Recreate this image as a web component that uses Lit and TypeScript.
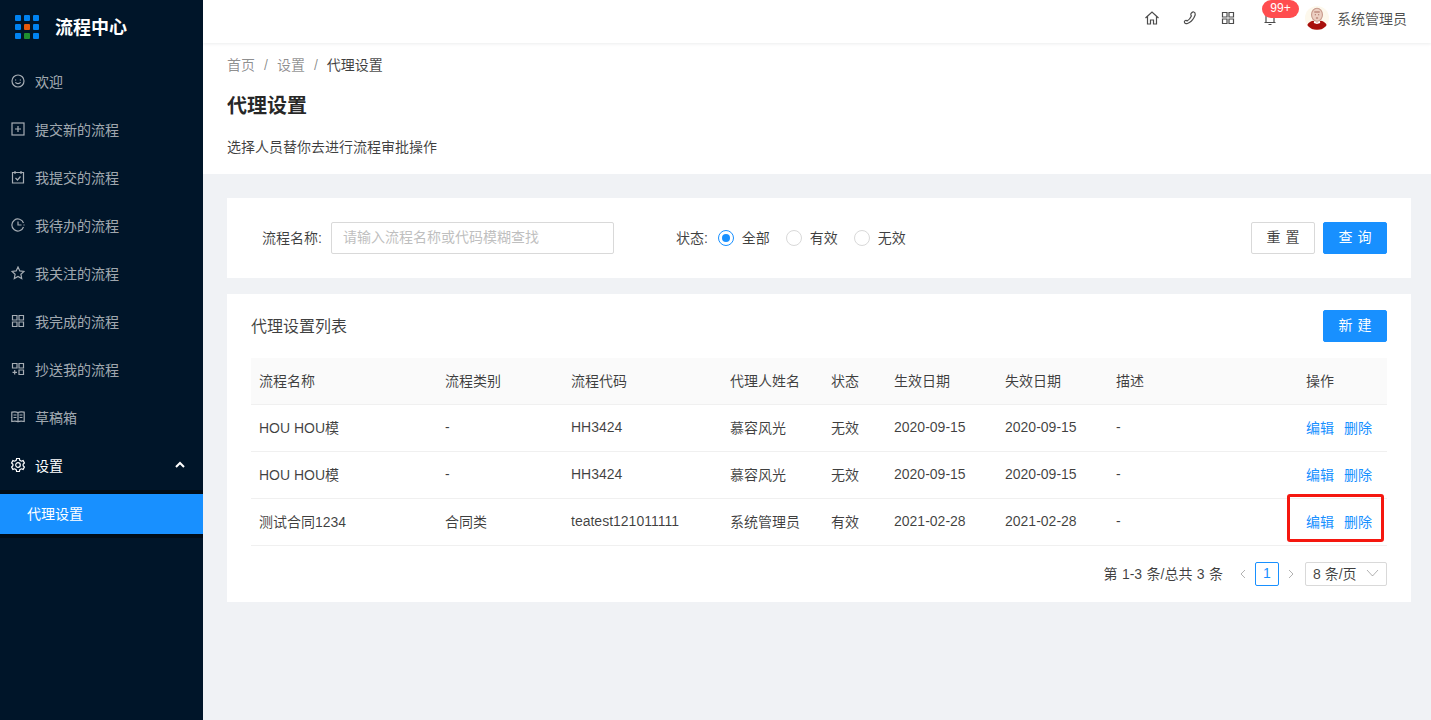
import { LitElement, html, css, svg } from 'lit';
import { customElement } from 'lit/decorators.js';

const menuIcons = {
  smile: svg`<circle cx="7" cy="7" r="6"/><path d="M4.600 5.600v.8M9.400 5.600v.8M4.400 8.400c1.300 1.600 3.900 1.600 5.200 0"/>`,
  plus: svg`<rect x="1" y="1" width="12" height="12"/><path d="M7 4v6M4 7h6"/>`,
  task: svg`<path d="M1.500 2.500h11v10.500h-11zM4 1v3M10 1v3M4.500 8l2 2 3-3.500"/>`,
  clock: svg`<path d="M12.500 5A6 6 0 1 0 12.500 9M7 3.500V7h3.500M12.500 7h1"/>`,
  star: svg`<path d="M7 1l1.800 3.900 4.200.5-3.100 2.900.8 4.200L7 10.400 3.300 12.500l.8-4.200L1 5.400l4.200-.5z"/>`,
  grid: svg`<path d="M1.500 1.500h4.500v4.500H1.500zM8 1.500h4.500v4.500H8zM1.500 8h4.500v4.500H1.500zM8 8h4.500v4.500H8z"/>`,
  gridAdd: svg`<path d="M1.500 1.500h4.500v4.500H1.500zM8 1.500h4.500v4.500H8zM8 8h4.500v4.500H8zM3.700 8v4.500M1.500 10.300h4.500"/>`,
  book: svg`<path d="M7 2.500C5.500 1.700 3 1.700.8 2.200v9.300C3 11 5.500 11 7 11.800c1.500-.8 4-.8 6.200-.3V2.200C11 1.700 8.500 1.700 7 2.500zM7 2.500v9.300M2.500 5h3M2.500 7.500h3M8.500 5h3M8.500 7.500h3"/>`,
  gear: svg`<path d="M5.600 1h2.800l.4 1.800 1.500.9 1.800-.6 1.300 2.400-1.300 1.200v1.600l1.300 1.200-1.300 2.400-1.800-.6-1.500.9-.4 1.800H5.600l-.4-1.800-1.500-.9-1.800.6L.6 9.500l1.300-1.200V6.700L.6 5.500l1.300-2.400 1.800.6 1.500-.9z" transform="translate(0 -.5)"/><circle cx="7" cy="7" r="2.300"/>`,
};

const menu: [keyof typeof menuIcons, string][] = [
  ['smile', '欢迎'],
  ['plus', '提交新的流程'],
  ['task', '我提交的流程'],
  ['clock', '我待办的流程'],
  ['star', '我关注的流程'],
  ['grid', '我完成的流程'],
  ['gridAdd', '抄送我的流程'],
  ['book', '草稿箱'],
];

const rows = [
  ['HOU HOU模', '-', 'HH3424', '慕容风光', '无效', '2020-09-15', '2020-09-15', '-'],
  ['HOU HOU模', '-', 'HH3424', '慕容风光', '无效', '2020-09-15', '2020-09-15', '-'],
  ['测试合同1234', '合同类', 'teatest121011111', '系统管理员', '有效', '2021-02-28', '2021-02-28', '-'],
];

const cols = ['流程名称', '流程类别', '流程代码', '代理人姓名', '状态', '生效日期', '失效日期', '描述', '操作'];
const widths = [186, 126, 159, 101, 63, 111, 111, 190, 89];

@customElement('app-root')
export class AppRoot extends LitElement {
  static styles = css`
    :host {
      display: flex;
      height: 720px;
      overflow: hidden;
      font-family: 'Liberation Sans', 'Noto Sans CJK SC', sans-serif;
      font-size: 14px;
      color: rgba(0, 0, 0, 0.75);
      background: #f0f2f5;
    }
    .side {
      width: 203px;
      flex: none;
      background: #001529;
      color: rgba(255, 255, 255, 0.65);
    }
    .logo {
      display: flex;
      align-items: center;
      gap: 16px;
      height: 54px;
      padding-left: 15px;
      margin-bottom: 8px;
      color: #fff;
      font-size: 18px;
      font-weight: 700;
    }
    .logo span {
      padding-bottom: 2px;
    }
    .dots {
      display: grid;
      grid-template-columns: repeat(3, 6px);
      gap: 3px;
    }
    .dots i {
      width: 6px;
      height: 6px;
      border-radius: 1px;
      background: #0082f0;
    }
    .item {
      display: flex;
      align-items: center;
      height: 40px;
      box-sizing: border-box;
      margin-bottom: 8px;
      padding: 0 0 3px 11px;
      gap: 10px;
    }
    .item svg {
      width: 14px;
      height: 14px;
      flex: none;
    }
    .item.open {
      color: #fff;
      margin-bottom: 4px;
    }
    .item .arrow {
      width: 10px;
      height: 10px;
      margin-left: auto;
      margin-right: 18px;
    }
    .sub {
      background: #000c17;
      padding: 4px 0;
    }
    .sub div {
      height: 40px;
      line-height: 40px;
      padding-left: 27px;
      background: #1890ff;
      color: #fff;
    }
    .main {
      flex: 1;
      min-width: 0;
      position: relative;
    }
    .top {
      height: 43px;
      box-sizing: border-box;
      padding: 0 24px 7px 0;
      background: #fff;
      box-shadow: 0 1px 3px rgba(0, 21, 41, 0.08);
      display: flex;
      align-items: center;
      justify-content: flex-end;
      position: relative;
      color: rgba(0, 0, 0, 0.7);
    }
    .top svg.ti {
      width: 16px;
      height: 16px;
      margin-right: 22px;
    }
    .top svg.ti.last {
      margin-right: 0;
    }
    .bell {
      position: relative;
      width: 16px;
      height: 16px;
      margin: 0 27px 0 26px;
    }
    .bell svg {
      width: 16px;
      height: 16px;
    }
    .badge {
      position: absolute;
      top: -10px;
      left: 0;
      height: 18px;
      line-height: 16px;
      width: 37px;
      text-align: center;
      border-radius: 9px;
      background: #ff4d4f;
      color: #fff;
      font-size: 12px;
    }
    .avatar {
      width: 24px;
      height: 24px;
      border-radius: 50%;
      background: #fdf8ec;
      margin-right: 8px;
    }
    .head {
      background: #fff;
      height: 131px;
      padding: 12px 24px 0;
      box-sizing: border-box;
    }
    .crumb {
      display: flex;
      gap: 9px;
      line-height: 20px;
      color: rgba(0, 0, 0, 0.45);
    }
    .crumb b {
      font-weight: 400;
      color: rgba(0, 0, 0, 0.75);
    }
    h1 {
      margin: 16px 0 0;
      font-size: 20px;
      line-height: 30px;
      font-weight: 600;
      color: rgba(0, 0, 0, 0.85);
    }
    .desc {
      margin-top: 16px;
      line-height: 20px;
    }
    .card {
      background: #fff;
      margin: 0 20px 16px 24px;
    }
    .filter {
      margin-top: 24px;
      height: 80px;
      display: flex;
      align-items: center;
      padding: 0 24px 0 35px;
    }
    .filter > span:not(.radio) {
      padding-bottom: 2px;
    }
    .input {
      width: 283px;
      height: 32px;
      box-sizing: border-box;
      margin-left: 9px;
      border: 1px solid #d9d9d9;
      border-radius: 2px;
      padding-left: 11px;
      line-height: 29px;
      color: #bfbfbf;
    }
    .state {
      margin-left: 62px;
    }
    .radio {
      width: 16px;
      height: 16px;
      box-sizing: border-box;
      border: 1px solid #d9d9d9;
      border-radius: 50%;
      margin: 0 8px 0 16px;
      position: relative;
    }
    .radio.first {
      margin-left: 10px;
    }
    .radio.on {
      border-color: #1890ff;
    }
    .radio.on::after {
      content: '';
      position: absolute;
      inset: 3px;
      border-radius: 50%;
      background: #1890ff;
    }
    .btn {
      width: 64px;
      height: 32px;
      line-height: 29px;
      box-sizing: border-box;
      text-align: center;
      border: 1px solid #d9d9d9;
      border-radius: 2px;
      background: #fff;
      word-spacing: 1px;
    }
    .btn.primary {
      background: #1890ff;
      border-color: #1890ff;
      color: #fff;
    }
    .btn.gap {
      margin-left: 8px;
    }
    .grow {
      flex: 1;
    }
    .list {
      padding: 16px 24px;
      height: 308px;
      box-sizing: border-box;
    }
    .list-head {
      display: flex;
      align-items: center;
      justify-content: space-between;
      height: 32px;
      font-size: 16px;
      margin-bottom: 16px;
    }
    .list-head > span {
      padding-bottom: 3px;
    }
    .list-head .btn {
      font-size: 14px;
    }
    table {
      border-collapse: collapse;
      table-layout: fixed;
      width: 1136px;
    }
    th,
    td {
      box-sizing: border-box;
      padding: 0 8px 2px;
      border-bottom: 1px solid #f0f0f0;
    }
    th {
      height: 46px;
      background: #fafafa;
      font-weight: 400;
      text-align: left;
    }
    td {
      height: 47px;
      padding-bottom: 1px;
    }
    .act {
      color: #1890ff;
    }
    .act span + span {
      margin-left: 10px;
    }
    .pager {
      display: flex;
      align-items: center;
      justify-content: flex-end;
      margin-top: 16px;
      height: 24px;
    }
    .pager > span:first-child {
      padding-bottom: 2px;
      word-spacing: 0.5px;
    }
    .pager svg {
      width: 10px;
      height: 10px;
      color: rgba(0, 0, 0, 0.3);
    }
    .pager .prev {
      margin-left: 15px;
    }
    .page {
      width: 24px;
      height: 24px;
      box-sizing: border-box;
      border: 1px solid #1890ff;
      border-radius: 2px;
      color: #1890ff;
      text-align: center;
      line-height: 21px;
      margin: 0 7px;
    }
    .size {
      display: flex;
      align-items: center;
      justify-content: space-between;
      width: 82px;
      height: 24px;
      box-sizing: border-box;
      border: 1px solid #d9d9d9;
      border-radius: 2px;
      padding: 0 7px 2px;
      margin-left: 9px;
    }
    .size svg {
      width: 13px;
      height: 13px;
    }
    .mark {
      position: absolute;
      left: 1084px;
      top: 494px;
      width: 97px;
      height: 48px;
      box-sizing: border-box;
      border: 3px solid #f5170f;
      border-radius: 3px;
    }
  `;

  render() {
    return html`
      <aside class="side">
        <div class="logo">
          <div class="dots">
            <i></i><i></i><i></i><i></i><i style="background:#e8590c"></i><i></i><i></i><i style="background:#1f8f2f"></i><i></i>
          </div>
          <span>流程中心</span>
        </div>
        ${menu.map(
          ([icon, label]) => html`<div class="item">
            <svg viewBox="0 0 14 14" fill="none" stroke="currentColor" stroke-width="1.2">${menuIcons[icon]}</svg>${label}
          </div>`
        )}
        <div class="item open">
          <svg viewBox="0 0 14 14" fill="none" stroke="currentColor" stroke-width="1.2">${menuIcons.gear}</svg>设置
          <svg class="arrow" viewBox="0 0 10 10" fill="none" stroke="currentColor" stroke-width="2"><path d="M1 7l4-4 4 4"/></svg>
        </div>
        <div class="sub"><div>代理设置</div></div>
      </aside>
      <div class="main">
        <header class="top">
          <svg class="ti" viewBox="0 0 16 16" fill="none" stroke="currentColor" stroke-width="1.2"><path d="M1.500 8L8 2l6.500 6M3.500 6.500V14h3v-4h3v4h3V6.500"/></svg>
          <svg class="ti" viewBox="0 0 16 16" fill="none" stroke="currentColor" stroke-width="1.2"><path d="M10 2.500c1-1 2.500-.5 3 .5s.3 2.500-.8 4.200c-1.500 2.700-4 5.300-6.700 6.300-1.200.4-2.500 0-3-1s0-1.500.8-2c.8-.4 1.400-.2 1.800.5 1.700-1 3.400-3 4.300-5-.6-.5-.9-1.200-.4-2.500z"/></svg>
          <svg class="ti last" viewBox="0 0 16 16" fill="none" stroke="currentColor" stroke-width="1.2"><path d="M2.500 2.500h4.500v4.500H2.500zM9 2.500h4.500v4.500H9zM2.500 9h4.500v4.500H2.500zM9 9h4.500v4.500H9z"/></svg>
          <div class="bell">
            <svg viewBox="0 0 16 16" fill="none" stroke="currentColor" stroke-width="1.2"><path d="M4 12V6.500a4 4 0 0 1 8 0V12M2.500 12.500h11M6.500 14.500h3"/></svg>
            <span class="badge">99+</span>
          </div>
          <svg class="avatar" viewBox="0 0 22 22">
            <path d="M1.500 21c0-5 3-7 6-7.500l3.500 2 3.500-2c3 .5 6 2.500 6 7.500-2 1-15 1-19 0z" fill="#a80f0c"/>
            <path d="M8.500 13.500l2.500 2 2.500-2 .5 2-3 1-3-1z" fill="#fff"/>
            <ellipse cx="11" cy="8" rx="5" ry="6" fill="#eccfc2" stroke="#c79a8c" stroke-width="1"/>
            <path d="M8.500 5.500h5M9 8h1M12 8h1M10 11h2" stroke="#a86a5c" stroke-width="1"/>
          </svg>
          系统管理员
        </header>
        <section class="head">
          <div class="crumb"><span>首页</span><span>/</span><span>设置</span><span>/</span><b>代理设置</b></div>
          <h1>代理设置</h1>
          <div class="desc">选择人员替你去进行流程审批操作</div>
        </section>
        <section class="card filter">
          <span>流程名称:</span>
          <div class="input">请输入流程名称或代码模糊查找</div>
          <span class="state">状态:</span>
          <span class="radio first on"></span><span>全部</span>
          <span class="radio"></span><span>有效</span>
          <span class="radio"></span><span>无效</span>
          <span class="grow"></span>
          <div class="btn">重 置</div>
          <div class="btn primary gap">查 询</div>
        </section>
        <section class="card list">
          <div class="list-head"><span>代理设置列表</span><div class="btn primary">新 建</div></div>
          <table>
            <colgroup>${widths.map((w) => html`<col style="width:${w}px" />`)}</colgroup>
            <thead><tr>${cols.map((c) => html`<th>${c}</th>`)}</tr></thead>
            <tbody>
              ${rows.map(
                (r) => html`<tr>
                  ${r.map((v) => html`<td>${v}</td>`)}
                  <td class="act"><span>编辑</span><span>删除</span></td>
                </tr>`
              )}
            </tbody>
          </table>
          <div class="pager">
            <span>第 1-3 条/总共 3 条</span>
            <svg class="prev" viewBox="0 0 10 10" fill="none" stroke="currentColor"><path d="M7 1L3 5l4 4"/></svg>
            <span class="page">1</span>
            <svg viewBox="0 0 10 10" fill="none" stroke="currentColor"><path d="M3 1l4 4-4 4"/></svg>
            <div class="size"><span>8 条/页</span><svg viewBox="0 0 13 13" fill="none" stroke="currentColor"><path d="M1 4l5.500 6L12 4"/></svg></div>
          </div>
        </section>
        <div class="mark"></div>
      </div>
    `;
  }
}
